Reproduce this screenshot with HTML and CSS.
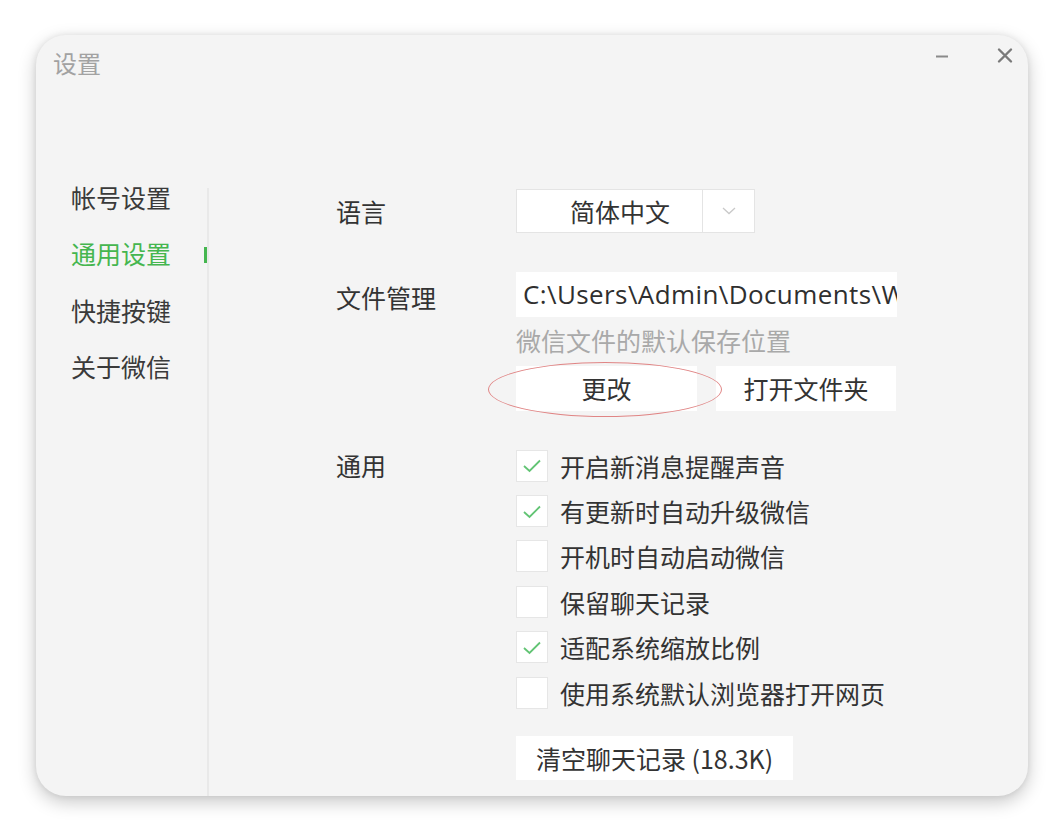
FILE: index.html
```html
<!DOCTYPE html>
<html lang="zh-CN">
<head>
<meta charset="utf-8">
<title>设置</title>
<link rel="stylesheet" href="styles.css">
</head>
<body>
<div class="stage">
  <div class="window">
    <div class="titlebar">
      <div class="title">设置</div>
      <div class="controls">
        <span class="ctl">
          <svg width="24" height="24" viewBox="0 0 24 24"><line x1="6" y1="12.5" x2="18" y2="12.5" stroke="#8a8a8a" stroke-width="2"/></svg>
        </span>
        <span class="ctl">
          <svg width="24" height="24" viewBox="0 0 24 24"><path d="M6 5.5 L18 17.5 M18 5.5 L6 17.5" stroke="#7a7a7a" stroke-width="2.4" stroke-linecap="round"/></svg>
        </span>
      </div>
    </div>
    <div class="body">
      <nav class="sidebar">
        <div class="nav-item">帐号设置</div>
        <div class="nav-item active">通用设置</div>
        <div class="nav-item">快捷按键</div>
        <div class="nav-item">关于微信</div>
      </nav>
      <div class="divider"></div>
      <main class="main">
        <div class="row row-lang">
          <div class="label">语言</div>
          <div class="field">
            <div class="select">
              <span class="select-value">简体中文</span>
              <span class="select-arrow">
                <svg width="14" height="8" viewBox="0 0 14 8"><polyline points="1,1 7,6.5 13,1" fill="none" stroke="#c9c9c9" stroke-width="1.3"/></svg>
              </span>
            </div>
          </div>
        </div>
        <div class="row row-file">
          <div class="label label-file">文件管理</div>
          <div class="field">
            <div class="path"><span class="path-text">C:\Users\Admin\Documents\W</span></div>
            <div class="hint">微信文件的默认保存位置</div>
            <div class="btn-row">
              <div class="btn btn-change">更改<span class="ring"></span></div>
              <div class="btn btn-open">打开文件夹</div>
            </div>
          </div>
        </div>
        <div class="row row-general">
          <div class="label label-general">通用</div>
          <div class="field">
            <div class="check-list">
              <div class="check"><span class="box on"><svg width="20" height="16" viewBox="0 0 20 16"><polyline points="2,8 7.5,13 18,2.5" fill="none" stroke="#62c474" stroke-width="1.8"/></svg></span><span class="check-label">开启新消息提醒声音</span></div>
              <div class="check"><span class="box on"><svg width="20" height="16" viewBox="0 0 20 16"><polyline points="2,8 7.5,13 18,2.5" fill="none" stroke="#62c474" stroke-width="1.8"/></svg></span><span class="check-label">有更新时自动升级微信</span></div>
              <div class="check"><span class="box"></span><span class="check-label">开机时自动启动微信</span></div>
              <div class="check"><span class="box"></span><span class="check-label">保留聊天记录</span></div>
              <div class="check"><span class="box on"><svg width="20" height="16" viewBox="0 0 20 16"><polyline points="2,8 7.5,13 18,2.5" fill="none" stroke="#62c474" stroke-width="1.8"/></svg></span><span class="check-label">适配系统缩放比例</span></div>
              <div class="check"><span class="box"></span><span class="check-label">使用系统默认浏览器打开网页</span></div>
            </div>
            <div class="btn btn-clear">清空聊天记录 (18.3K)</div>
          </div>
        </div>
      </main>
    </div>
  </div>
</div>
</body>
</html>
```
FILE: styles.css
```css
* { box-sizing: border-box; }
html, body { margin: 0; padding: 0; background: #ffffff; }
body {
  font-family: "Noto Sans CJK SC", "Noto Sans", sans-serif;
  color: #333333;
  width: 1064px;
  height: 832px;
  overflow: hidden;
}
.stage { padding: 35px 0 0 36px; }
.window {
  width: 992px;
  height: 761px;
  background: #f4f4f4;
  border-radius: 30px;
  box-shadow: 0 6px 18px rgba(0,0,0,0.22), 0 0 6px rgba(0,0,0,0.08);
  display: flex;
  flex-direction: column;
  overflow: hidden;
}
.titlebar {
  height: 150px;
  display: flex;
  align-items: flex-start;
  padding: 9px 11px 0 17px;
  flex: none;
}
.title {
  margin-top: 6px;
  font-size: 24px;
  line-height: 26px;
  color: #a2a2a2;
}
.controls {
  margin-left: auto;
  display: flex;
  gap: 39px;
}
.ctl { display: block; width: 24px; height: 24px; }
.ctl svg { display: block; }
.body {
  flex: 1;
  display: flex;
  min-height: 0;
}
.sidebar {
  width: 171px;
  flex: none;
  padding: 0 0 0 35px;
  display: flex;
  flex-direction: column;
  gap: 32.3px;
}
.nav-item {
  position: relative;
  font-size: 25px;
  line-height: 24px;
  height: 24px;
  color: #3a3a3a;
  white-space: nowrap;
}
.nav-item.active { color: #45b64f; }
.nav-item.active::after {
  content: "";
  position: absolute;
  right: 0;
  top: 6px;
  width: 3px;
  height: 16px;
  background: #45b64f;
}
.divider {
  width: 2px;
  flex: none;
  margin-top: 3px;
  background: #e9e9e9;
}
.main {
  flex: 1;
  padding: 4px 0 0 127px;
  display: flex;
  flex-direction: column;
}
.row {
  display: grid;
  grid-template-columns: 180px auto;
}
.label {
  font-size: 25px;
  line-height: 44px;
  color: #333;
  white-space: nowrap;
}
.row-file { margin-top: 39px; }
.label-file { line-height: 50px; }
.row-general { margin-top: 32px; }
.label-general { line-height: 45px; }
.select {
  width: 239px;
  height: 44px;
  background: #ffffff;
  border: 1px solid #e4e4e4;
  display: flex;
}
.select-value {
  width: 186px;
  padding-left: 53px;
  font-size: 25px;
  line-height: 42px;
  color: #333;
  border-right: 1px solid #e4e4e4;
}
.select-arrow {
  flex: 1;
  display: flex;
  align-items: center;
  justify-content: center;
}
.select-arrow svg { display: block; }
.path {
  width: 381px;
  height: 45px;
  background: #ffffff;
  padding-left: 7px;
  font-family: "Open Sans", "Noto Sans CJK SC", sans-serif;
  font-size: 26px;
  letter-spacing: 0.4px;
  line-height: 45px;
  color: #2f2f2f;
  white-space: nowrap;
  overflow: hidden;
}
.hint {
  margin-top: 10px;
  font-size: 25px;
  line-height: 26px;
  color: #a9a9a9;
  white-space: nowrap;
}
.btn-row {
  margin-top: 13px;
  display: flex;
  gap: 19px;
}
.btn {
  height: 45px;
  background: #ffffff;
  font-size: 25px;
  line-height: 45px;
  text-align: center;
  color: #333;
  white-space: nowrap;
}
.btn-change { position: relative; width: 181px; }
.btn-open { width: 180px; }
.ring {
  position: absolute;
  left: -28px;
  top: -4px;
  width: 234px;
  height: 55px;
  border: 1.6px solid #e08585;
  border-radius: 50%;
  pointer-events: none;
}
.check-list {
  display: flex;
  flex-direction: column;
}
.check {
  height: 45.4px;
  display: flex;
  align-items: center;
}
.box {
  width: 32px;
  height: 32px;
  background: #ffffff;
  border: 1px solid #e6e6e6;
  display: flex;
  align-items: center;
  justify-content: center;
  flex: none;
}
.box svg { display: block; margin-top: 1px; }
.check-label {
  margin-left: 12px;
  font-size: 25px;
  line-height: 30px;
  color: #333;
  white-space: nowrap;
}
.btn-clear {
  margin-top: 21px;
  width: 277px;
  height: 44px;
  line-height: 44px;
  font-size: 25px;
}
```
